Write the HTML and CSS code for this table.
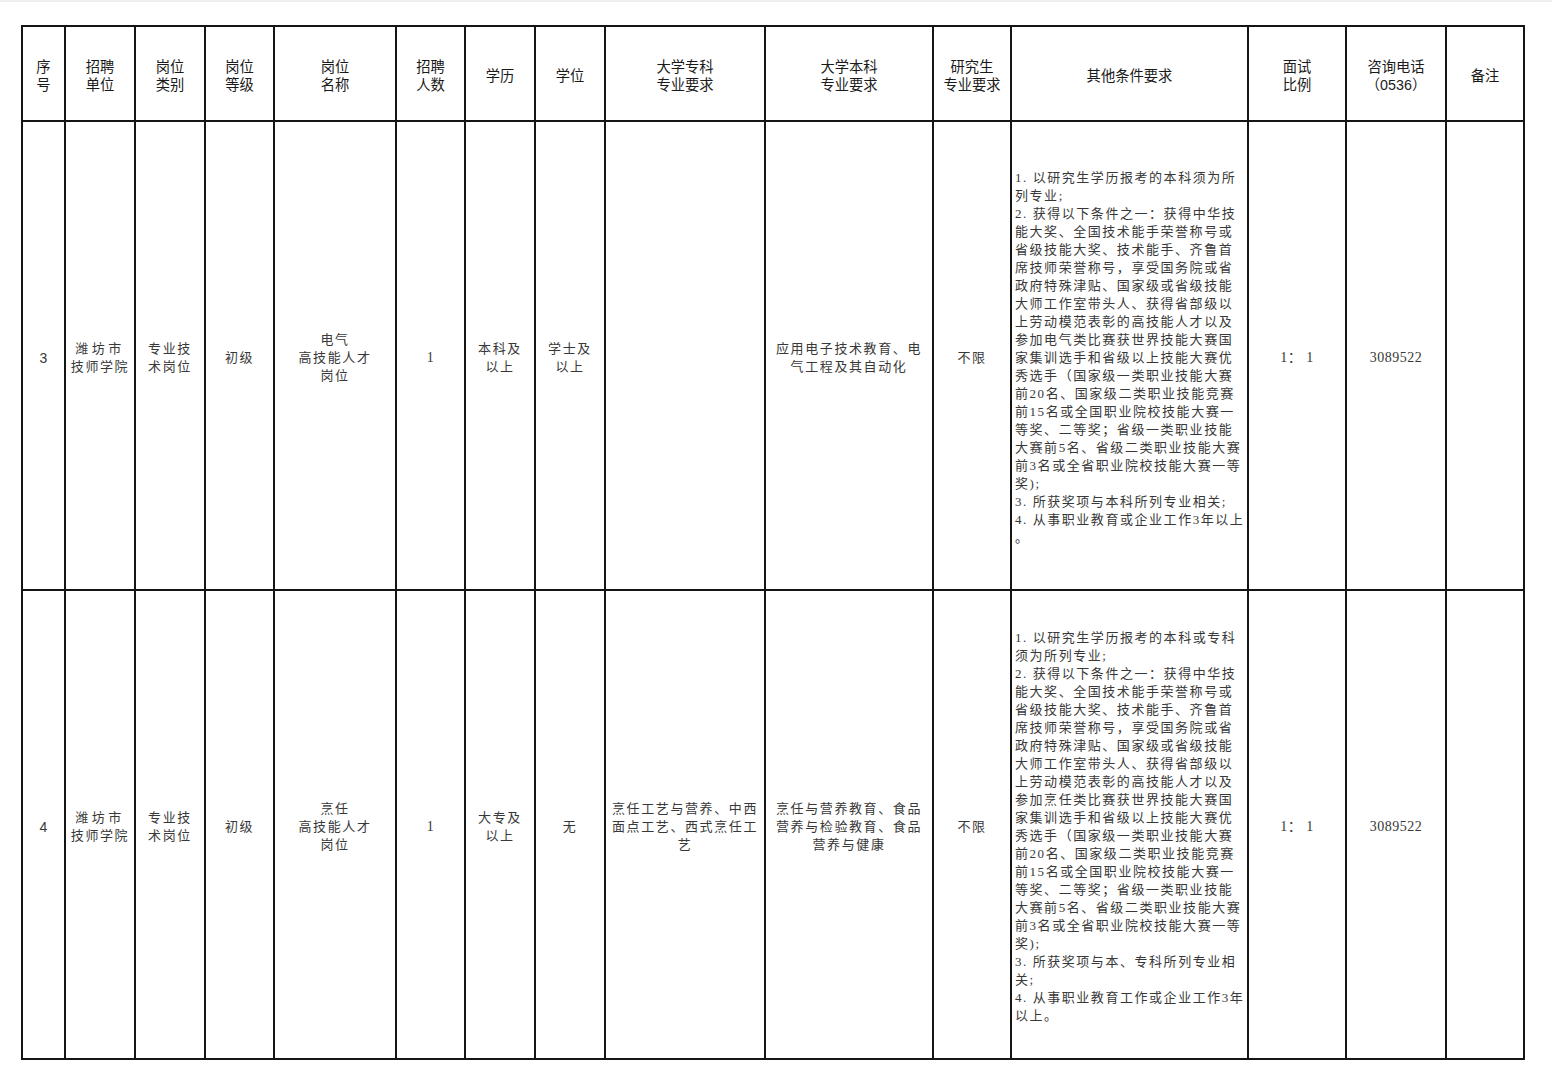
FILE: index.html
```html
<!DOCTYPE html>
<html lang="zh">
<head>
<meta charset="utf-8">
<title>招聘岗位表</title>
<link rel="stylesheet" href="styles.css">
</head>
<body>
<div class="topstrip"></div>
<div class="page">
<table class="jobs">
  <colgroup>
    <col class="c1"><col class="c2"><col class="c3"><col class="c4"><col class="c5">
    <col class="c6"><col class="c7"><col class="c8"><col class="c9"><col class="c10">
    <col class="c11"><col class="c12"><col class="c13"><col class="c14"><col class="c15">
  </colgroup>
  <thead>
    <tr class="head">
      <th>序<br>号</th>
      <th>招聘<br>单位</th>
      <th>岗位<br>类别</th>
      <th>岗位<br>等级</th>
      <th>岗位<br>名称</th>
      <th>招聘<br>人数</th>
      <th>学历</th>
      <th>学位</th>
      <th>大学专科<br>专业要求</th>
      <th>大学本科<br>专业要求</th>
      <th>研究生<br>专业要求</th>
      <th>其他条件要求</th>
      <th>面试<br>比例</th>
      <th>咨询电话<br>（0536）</th>
      <th>备注</th>
    </tr>
  </thead>
  <tbody>
    <tr class="row">
      <td class="num">3</td>
      <td><span class="wide">潍坊市</span><br>技师学院</td>
      <td>专业技<br>术岗位</td>
      <td>初级</td>
      <td>电气<br>高技能人才<br>岗位</td>
      <td class="digit">1</td>
      <td>本科及<br>以上</td>
      <td>学士及<br>以上</td>
      <td></td>
      <td>应用电子技术教育、电<br>气工程及其自动化</td>
      <td>不限</td>
      <td class="cond">1. 以研究生学历报考的本科须为所<br>列专业;<br>2. 获得以下条件之一：获得中华技<br>能大奖、全国技术能手荣誉称号或<br>省级技能大奖、技术能手、齐鲁首<br>席技师荣誉称号，享受国务院或省<br>政府特殊津贴、国家级或省级技能<br>大师工作室带头人、获得省部级以<br>上劳动模范表彰的高技能人才以及<br>参加电气类比赛获世界技能大赛国<br>家集训选手和省级以上技能大赛优<br>秀选手（国家级一类职业技能大赛<br>前20名、国家级二类职业技能竞赛<br>前15名或全国职业院校技能大赛一<br>等奖、二等奖；省级一类职业技能<br>大赛前5名、省级二类职业技能大赛<br>前3名或全省职业院校技能大赛一等<br>奖);<br>3. 所获奖项与本科所列专业相关;<br>4. 从事职业教育或企业工作3年以上<br>。</td>
      <td class="digit">1：&nbsp;1</td>
      <td class="digit">3089522</td>
      <td></td>
    </tr>
    <tr class="row">
      <td class="num">4</td>
      <td><span class="wide">潍坊市</span><br>技师学院</td>
      <td>专业技<br>术岗位</td>
      <td>初级</td>
      <td>烹任<br>高技能人才<br>岗位</td>
      <td class="digit">1</td>
      <td>大专及<br>以上</td>
      <td>无</td>
      <td>烹任工艺与营养、中西<br>面点工艺、西式烹任工<br>艺</td>
      <td>烹任与营养教育、食品<br>营养与检验教育、食品<br>营养与健康</td>
      <td>不限</td>
      <td class="cond">1. 以研究生学历报考的本科或专科<br>须为所列专业;<br>2. 获得以下条件之一：获得中华技<br>能大奖、全国技术能手荣誉称号或<br>省级技能大奖、技术能手、齐鲁首<br>席技师荣誉称号，享受国务院或省<br>政府特殊津贴、国家级或省级技能<br>大师工作室带头人、获得省部级以<br>上劳动模范表彰的高技能人才以及<br>参加烹任类比赛获世界技能大赛国<br>家集训选手和省级以上技能大赛优<br>秀选手（国家级一类职业技能大赛<br>前20名、国家级二类职业技能竞赛<br>前15名或全国职业院校技能大赛一<br>等奖、二等奖；省级一类职业技能<br>大赛前5名、省级二类职业技能大赛<br>前3名或全省职业院校技能大赛一等<br>奖);<br>3. 所获奖项与本、专科所列专业相<br>关;<br>4. 从事职业教育工作或企业工作3年<br>以上。</td>
      <td class="digit">1：&nbsp;1</td>
      <td class="digit">3089522</td>
      <td></td>
    </tr>
  </tbody>
</table>
</div>
</body>
</html>
```

FILE: styles.css
```css
html, body {
  margin: 0;
  padding: 0;
  background: #ffffff;
}

.topstrip {
  height: 2px;
  background: #eeeeee;
}

.page {
  padding: 23px 0 0 21px;
}

.jobs {
  border-collapse: collapse;
  table-layout: fixed;
  width: 1504px;
}

.c1 { width: 43px; }
.c2 { width: 70px; }
.c3 { width: 70px; }
.c4 { width: 69px; }
.c5 { width: 122px; }
.c6 { width: 69px; }
.c7 { width: 70px; }
.c8 { width: 70px; }
.c9 { width: 160px; }
.c10 { width: 168px; }
.c11 { width: 78px; }
.c12 { width: 237px; }
.c13 { width: 98px; }
.c14 { width: 100px; }
.c15 { width: 78px; }

.jobs th,
.jobs td {
  border: 2px solid #151515;
  padding: 0 2px;
  text-align: center;
  vertical-align: middle;
  white-space: nowrap;
  overflow: hidden;
}

.jobs th {
  font-family: "Liberation Sans", "Noto Sans CJK SC", sans-serif;
  font-size: 14.3px;
  font-weight: 400;
  line-height: 18px;
  color: #1a1a1a;
  padding-top: 4px;
}

.head {
  height: 95px;
}

.row {
  height: 469px;
}

.jobs td {
  font-family: "Liberation Serif", "Noto Sans CJK SC", serif;
  font-size: 13px;
  font-weight: 400;
  letter-spacing: 1.6px;
  line-height: 18px;
  color: #383838;
  padding-top: 5px;
}

.jobs td.num {
  font-family: "Liberation Sans", sans-serif;
  font-size: 14px;
  letter-spacing: 0;
}

.jobs td.digit {
  font-size: 14px;
  letter-spacing: 0.5px;
}

.jobs td.cond {
  text-align: left;
  padding: 5px 2px 0 3px;
  letter-spacing: 1.55px;
}

.wide {
  letter-spacing: 3.5px;
}
```
